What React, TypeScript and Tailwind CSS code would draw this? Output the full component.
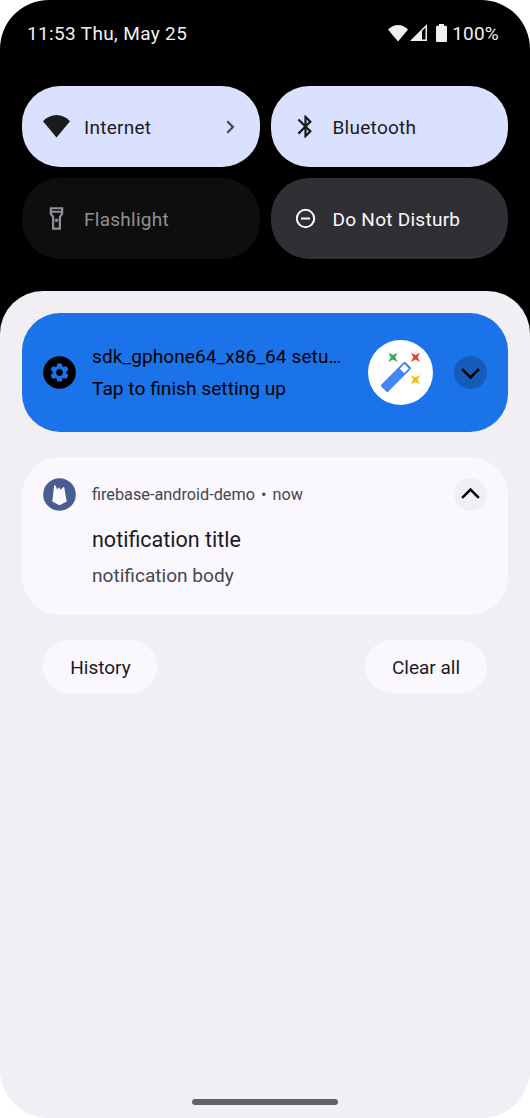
import type { ReactNode } from 'react';

function Wifi({ className }: { className: string }) {
  return (
    <svg viewBox="0 0 24 20" className={className} fill="currentColor" preserveAspectRatio="none">
      <path d="M12 20 0 5.6C3.3 2 7.4 0 12 0s8.700 2 12 5.600z" />
    </svg>
  );
}

function Chevron({ className }: { className: string }) {
  return (
    <svg viewBox="0 0 32 32" className={className} fill="none" stroke="currentColor" strokeWidth="2.4">
      <path d="m7.900 12.700 8.100 8.100 8.100-8.100" />
    </svg>
  );
}

function Bluetooth() {
  return (
    <svg viewBox="0 0 24 24" className="size-[27px]" fill="currentColor">
      <path d="M17.710 7.710 12 2h-1v7.590L6.410 5 5 6.410 10.590 12 5 17.590 6.410 19 11 14.410V22h1l5.710-5.710-4.300-4.290 4.300-4.290zM13 5.830l1.880 1.880L13 9.590V5.830zm1.880 10.460L13 18.170v-3.760l1.880 1.880z" />
    </svg>
  );
}

function Flashlight() {
  return (
    <svg viewBox="0 0 24 24" className="size-[27px]">
      <path
        fill="currentColor"
        fillRule="evenodd"
        d="M6 2h12v6l-2 3v11H8V11L6 8V2zm2 1.800V5h8V3.800H8zM8 6.800v.6l2 3V20h4v-9.600l2-3v-.6H8z"
      />
      <circle cx="12" cy="13.500" r="1.500" fill="currentColor" />
    </svg>
  );
}

function DoNotDisturb() {
  return (
    <svg viewBox="0 0 27 27" className="size-[27px]" fill="none" stroke="currentColor" strokeWidth="2">
      <circle cx="13.500" cy="13.500" r="8.700" />
      <path d="M9 13.500h9" />
    </svg>
  );
}

const spark = 'M-4.600-4.600 0-2.200l4.600-2.400L2.200 0l2.400 4.600L0 2.200l-4.600 2.400L-2.200 0z';

function Wand() {
  return (
    <svg viewBox="0 0 65 65" className="size-[65px] shrink-0">
      <circle cx="32.500" cy="32.500" r="32.500" fill="#fff" />
      <g transform="translate(28 36.900) rotate(45)">
        <rect x="-4.900" y="-17.200" width="9.800" height="34.400" rx="1.500" fill="#4285f4" />
        <rect x="-3.100" y="-15" width="6.200" height="6.400" fill="#fff" />
      </g>
      <path transform="translate(25 17.300)" fill="#34a853" d={spark} />
      <path transform="translate(47.500 17.300)" fill="#ea4335" d={spark} />
      <path transform="translate(47.500 39.700)" fill="#fbbc04" d={spark} />
    </svg>
  );
}

function Tile({ icon, label, className, children }: { icon: ReactNode; label: string; className: string; children?: ReactNode }) {
  return (
    <button className={`flex h-[81px] items-center rounded-[38px] pl-[21px] pr-[22px] ${className}`}>
      <span className="flex w-[27px] justify-center">{icon}</span>
      <span className="ml-[14px] pt-[3px] text-[19px] leading-6 tracking-[0.27px]">{label}</span>
      {children}
    </button>
  );
}

export default function App() {
  return (
    <div className="h-[1118px] w-[530px] bg-white font-['Roboto',sans-serif]">
      <div className="flex h-full flex-col overflow-hidden rounded-[49px] bg-linear-to-b from-black from-50% to-[#f1eff4] to-50%">
        <header className="flex h-[86px] items-start justify-between pl-[27px] pr-[31px] pt-[22px] text-[19px] leading-6 text-[#f2eff4]">
          <span className="tracking-[0.35px]">11:53 Thu, May 25</span>
          <span className="flex items-center">
            <Wifi className="mb-[2px] h-[16.500px] w-[20px]" />
            <svg viewBox="0 0 17 17" className="mb-[3px] ml-[2px] size-[17px]" fill="currentColor">
              <path fillRule="evenodd" d="M0 17 17 0v17H0zM12 7v8.500h3.500V3.600z" />
            </svg>
            <svg viewBox="0 0 11 18" className="mb-[3px] ml-[9.500px] h-[18px] w-[11px]" fill="currentColor">
              <path d="M3 0h5v1.700h1.500c1 0 1.500.5 1.500 1.500v13.300c0 1-.5 1.500-1.500 1.500h-8C.5 18 0 17.500 0 16.500V3.200c0-1 .5-1.500 1.500-1.500H3z" />
            </svg>
            <span className="ml-[5px] tracking-[0.2px]">100%</span>
          </span>
        </header>

        <section className="grid h-[205px] shrink-0 grid-cols-2 content-start gap-[11px] px-[22px]">
          <Tile icon={<Wifi className="h-[22.500px] w-[27px] shrink-0" />} label="Internet" className="bg-[#dae1ff] text-[#1b1b1f]">
            <svg viewBox="0 0 16 16" className="ml-auto size-4 text-[#46464f]" fill="none" stroke="currentColor" strokeWidth="2.200">
              <path d="m5.300 2.300 5.600 5.700-5.600 5.700" />
            </svg>
          </Tile>
          <Tile icon={<Bluetooth />} label="Bluetooth" className="bg-[#dae1ff] text-[#1b1b1f]" />
          <Tile icon={<Flashlight />} label="Flashlight" className="bg-[#0e0e0e] text-[#919098]" />
          <Tile icon={<DoNotDisturb />} label="Do Not Disturb" className="bg-[#303034] text-[#fbf8fd]" />
        </section>

        <main className="flex flex-1 flex-col rounded-t-[43px] bg-[#f1eff4] px-[22px] pt-[22px]">
          <article className="flex h-[118.500px] items-center rounded-[38px] bg-[#1a73e8] px-[21px] text-black">
            <svg viewBox="0 0 33 33" className="size-[33px] shrink-0">
              <circle cx="16.500" cy="16.500" r="16.300" fill="#000" />
              <path
                transform="translate(5.100 5.100) scale(.95)"
                fill="#1a73e8"
                d="M19.140 12.940c.04-.3.06-.61.06-.94 0-.32-.02-.64-.07-.94l2.030-1.580c.18-.14.23-.41.120-.61l-1.920-3.320c-.12-.22-.37-.29-.59-.22l-2.390.96c-.5-.38-1.030-.7-1.620-.94l-.36-2.540c-.04-.24-.24-.41-.48-.41h-3.840c-.24 0-.43.17-.47.41l-.36 2.540c-.59.24-1.130.57-1.620.94l-2.390-.96c-.22-.08-.47 0-.59.22L2.740 8.870c-.12.21-.08.47.12.61l2.030 1.580c-.05.3-.09.63-.09.94s.02.64.07.94l-2.030 1.580c-.18.14-.23.41-.12.61l1.920 3.320c.12.22.37.29.59.22l2.390-.96c.5.38 1.030.7 1.620.94l.36 2.540c.05.24.24.41.48.41h3.840c.24 0 .44-.17.47-.41l.36-2.540c.59-.24 1.130-.56 1.620-.94l2.390.96c.22.08.47 0 .59-.22l1.920-3.320c.12-.22.07-.47-.12-.61l-2.010-1.580zM12 15.600c-1.980 0-3.600-1.620-3.600-3.600s1.620-3.600 3.600-3.600 3.600 1.620 3.600 3.600-1.620 3.600-3.600 3.600z"
              />
            </svg>
            <div className="ml-4 w-[276px] shrink-0 whitespace-nowrap pt-[2px] leading-8">
              <p className="text-[19px] tracking-[0.11px]">sdk_gphone64_x86_64 setu…</p>
              <p className="text-[19.200px]">Tap to finish setting up</p>
            </div>
            <Wand />
            <span className="ml-auto flex size-[33px] shrink-0 rounded-full bg-[#155cba]">
              <Chevron className="size-[33px]" />
            </span>
          </article>

          <article className="mt-[25px] h-[158px] rounded-[38px] bg-[#faf8fd] px-[21px] pt-[21px]">
            <div className="flex h-[33px] items-center">
              <svg viewBox="0 0 33 33" className="size-[33px] shrink-0">
                <circle cx="16.500" cy="16.500" r="16.300" fill="#495d92" />
                <path fill="#faf8fd" d="m9.300 23.500 1.800-15.700c.1-.8.800-1 1.200-.3l2.100 3.900 1-1.500c.3-.5.8-.5 1.100 0l1.200 1.900 2.200-2.400c.5-.6 1.300-.3 1.400.4l2.400 13.700-6.600 3.600c-.4.200-.8.200-1.200 0z" />
              </svg>
              <p className="ml-4 pt-px text-[16.250px] leading-5 text-[#46464f]">
                firebase-android-demo<span className="mx-[6px]">•</span>now
              </p>
              <span className="ml-auto flex size-[33px] rounded-full bg-[#f1eff4] text-black">
                <Chevron className="size-[33px] rotate-180" />
              </span>
            </div>
            <h2 className="ml-[49px] mt-[15px] text-[21.500px] leading-7 text-[#1b1b1f]">notification title</h2>
            <p className="ml-[49px] mt-[10px] text-[19.100px] leading-6 text-[#46464f]">notification body</p>
          </article>

          <div className="mt-[25px] flex justify-between px-[21px] text-[19px] leading-6 text-[#1b1b1f]">
            <button className="h-[53.500px] w-[114px] rounded-full bg-[#faf8fd] pl-px pt-[3px]">History</button>
            <button className="h-[53.500px] w-[122px] rounded-full bg-[#faf8fd] pt-[3px]">Clear all</button>
          </div>

          <div className="mb-[13px] mt-auto h-[6px] w-[146px] self-center rounded-full bg-[#626165]" />
        </main>
      </div>
    </div>
  );
}
